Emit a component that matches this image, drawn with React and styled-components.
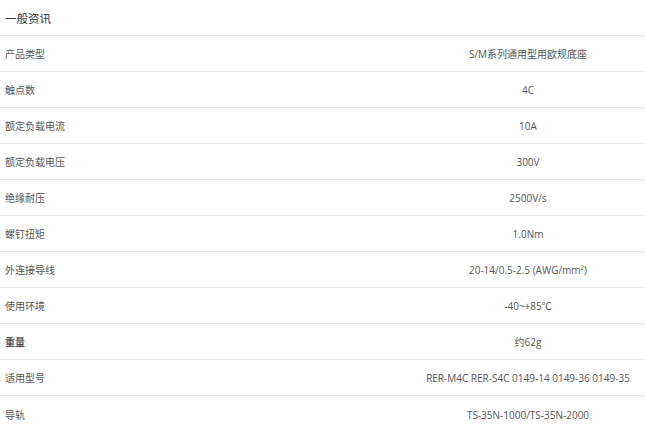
import React from "react";
import styled, { createGlobalStyle } from "styled-components";

const Global = createGlobalStyle`
  html, body { margin: 0; padding: 0; background: #fff; }
  body { font-family: "Open Sans", "Noto Sans CJK SC", sans-serif; }
`;

const Table = styled.div`
  width: 645px;
  display: flex;
  flex-direction: column;
`;

const Header = styled.div`
  height: 35px;
  display: flex;
  align-items: center;
  padding-left: 5px;
  font-size: 11.5px;
  color: #333;
  border-bottom: 1px solid #e8e8e8;
`;

const Row = styled.div`
  height: 35px;
  display: grid;
  grid-template-columns: 411px 1fr;
  align-items: center;
  border-bottom: ${(p) => (p.$last ? "none" : "1px solid #e8e8e8")};
  ${(p) => (p.$last ? "height: 37px;" : "")}
`;

const Label = styled.div`
  padding-left: 5px;
  font-size: 10px;
  color: #555;
  font-weight: ${(p) => (p.$bold ? 700 : 400)};
`;

const Value = styled.div`
  text-align: center;
  font-size: 10px;
  color: #555;
`;

const rows = [
  ["产品类型", "S/M系列通用型用欧规底座"],
  ["触点数", "4C"],
  ["额定负载电流", "10A"],
  ["额定负载电压", "300V"],
  ["绝缘耐压", "2500V/s"],
  ["螺钉扭矩", "1.0Nm"],
  ["外连接导线", "20-14/0.5-2.5 (AWG/mm²)"],
  ["使用环境", "-40~+85℃"],
  ["重量", "约62g", true],
  ["适用型号", "RER-M4C RER-S4C 0149-14 0149-36 0149-35"],
  ["导轨", "TS-35N-1000/TS-35N-2000"],
];

export default function App() {
  return (
    <>
      <Global />
      <Table>
        <Header>一般资讯</Header>
        {rows.map(([l, v, b], i) => (
          <Row key={l} $last={i === rows.length - 1}>
            <Label $bold={b}>{l}</Label>
            <Value>{v}</Value>
          </Row>
        ))}
      </Table>
    </>
  );
}
